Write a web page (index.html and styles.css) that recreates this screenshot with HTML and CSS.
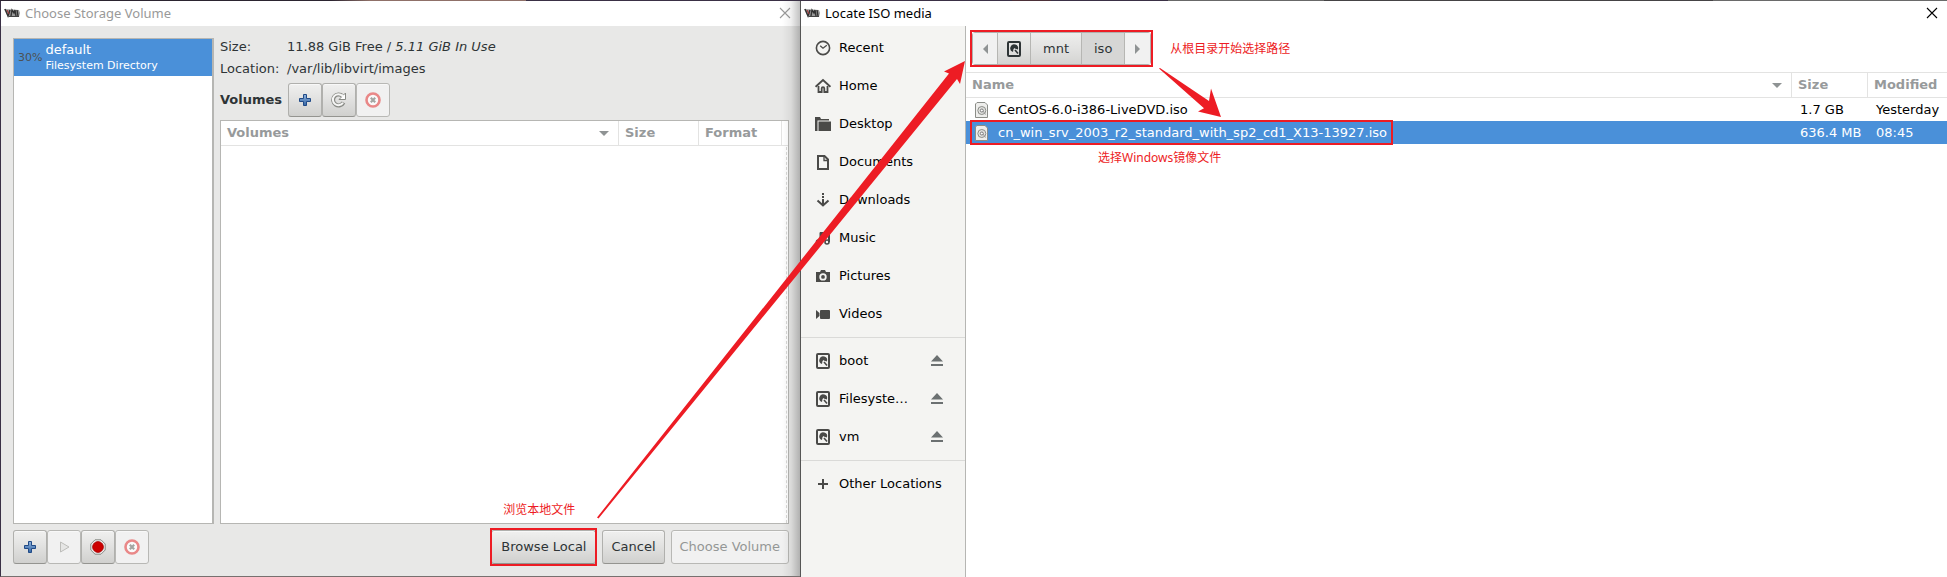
FILE: index.html
```
<!DOCTYPE html>
<html lang="en">
<head>
<meta charset="utf-8">
<title>Choose Storage Volume</title>
<link rel="stylesheet" href="styles.css">
</head>
<body>
<svg class="defs" aria-hidden="true">
  <defs>
    <linearGradient id="blue" x1="0" y1="0" x2="0" y2="1"><stop offset="0" stop-color="#8fb3dd"/><stop offset="1" stop-color="#3465a4"/></linearGradient>
    <symbol id="vm" viewBox="0 0 16 16">
      <path d="M0 4l15 1 1 3-1 4H4z" fill="#999"/>
      <path d="M1 4l3 7 2-6M7 11l1-6 2 3 1-3 1 6M13 5l1 6" fill="none" stroke="#333" stroke-width="1.4"/>
      <path d="M3 5l2 4" stroke="#a33" stroke-width="1"/>
      <path d="M5 11.500h10" stroke="#444"/>
    </symbol>
    <symbol id="close" viewBox="0 0 12 12"><path d="M1 1l10 10M11 1L1 11" fill="none" stroke="currentColor" stroke-width="1.1"/></symbol>
    <symbol id="add" viewBox="0 0 16 16"><path d="M6.500 2.500h3v4h4v3h-4v4h-3v-4h-4v-3h4z" fill="url(#blue)" stroke="#204a87" stroke-linejoin="round"/></symbol>
    <symbol id="refresh" viewBox="0 0 16 16">
      <path d="M12.500 10.500A5.500 5.500 0 1 1 11.500 4" fill="none" stroke="#888a85" stroke-width="4"/>
      <path d="M14.500 1v6.500H8l2.500-2.500z" fill="#fff" stroke="#888a85"/>
      <path d="M12 10.700A5.500 5.500 0 1 1 11.500 4l1-1" fill="none" stroke="#f6f6f5" stroke-width="2"/>
    </symbol>
    <symbol id="delete" viewBox="0 0 16 16">
      <circle cx="8" cy="8" r="6.500" fill="#fafafa" stroke="#e98888" stroke-width="2.600"/>
      <path d="M5.800 5.800l4.400 4.400M10.200 5.800l-4.400 4.400" stroke="#a3a5a2" stroke-width="2.200"/>
    </symbol>
    <symbol id="play" viewBox="0 0 16 16"><path d="M4.500 3l8.500 5-8.500 5z" fill="#e6e6e5" stroke="#bdbdba"/></symbol>
    <symbol id="stop" viewBox="0 0 16 16">
      <path d="M5 .8h6L15.200 5v6L11 15.200H5L.8 11V5z" fill="#eee" stroke="#888a85"/>
      <circle cx="8" cy="8" r="5.400" fill="#cc0000" stroke="#a40000" stroke-width=".8"/>
    </symbol>
    <symbol id="recent" viewBox="0 0 16 16"><circle cx="8" cy="8" r="6.600" fill="none" stroke="currentColor" stroke-width="1.600"/><path d="M5.200 5.700L8 8.200l3.800-3" fill="none" stroke="currentColor" stroke-width="1.300"/></symbol>
    <symbol id="home" viewBox="0 0 16 16"><path d="M.6 8.800L8 2l7.400 6.800" fill="none" stroke="currentColor" stroke-width="1.900"/><path d="M3.500 8v6H6.700v-3.500a1.300 1.300 0 0 1 2.600 0V14h3.200V8" fill="none" stroke="currentColor" stroke-width="1.800"/></symbol>
    <symbol id="desktop" viewBox="0 0 16 16"><path d="M0 1h5l1 2h8v1.500H2.500V15H0z" fill="currentColor"/><path d="M3.500 5.500H16V15H3.500z" fill="currentColor"/></symbol>
    <symbol id="documents" viewBox="0 0 16 16"><path d="M3 2h6.500L13 5.500V15H3z" fill="none" stroke="currentColor" stroke-width="2"/><path d="M9 2v4.500h4" fill="none" stroke="currentColor" stroke-width="1.300"/></symbol>
    <symbol id="downloads" viewBox="0 0 16 16"><path d="M8 1v2M8 4v2M8 7v6" stroke="currentColor" stroke-width="2"/><path d="M2.500 8.500L8 13.500l5.500-5" fill="none" stroke="currentColor" stroke-width="2"/></symbol>
    <symbol id="music" viewBox="0 0 16 16"><path d="M5.500 12V3.500H14V12" fill="none" stroke="currentColor" stroke-width="2"/><path d="M5 2h10v4H5z" fill="currentColor"/><circle cx="3.500" cy="12" r="2.800" fill="currentColor"/><circle cx="12" cy="12" r="2" fill="none" stroke="currentColor" stroke-width="1.600"/></symbol>
    <symbol id="pictures" viewBox="0 0 16 16"><path fill-rule="evenodd" d="M1 4h4l1-2h4l1 2h4v10H1zM8 5.200a3.700 3.700 0 1 0 0 7.400 3.700 3.700 0 0 0 0-7.400z" fill="currentColor"/><circle cx="8" cy="8.900" r="1.900" fill="currentColor"/></symbol>
    <symbol id="videos" viewBox="0 0 16 16"><path d="M1 4l3.500 3v3L1 13z" fill="currentColor"/><rect x="5" y="4" width="10" height="9" rx="1" fill="currentColor"/></symbol>
    <symbol id="drive" viewBox="0 0 16 16"><rect x="2" y="1" width="12" height="14" rx="1" fill="none" stroke="currentColor" stroke-width="2"/><path d="M7 11a3.900 3.900 0 1 1 4.900-2.500L9.300 7.800 8.700 7 7.500 8z" fill="currentColor"/><path d="M9 9l3 3.500" stroke="currentColor" stroke-width="1.600"/></symbol>
    <symbol id="plus" viewBox="0 0 16 16"><path d="M8 3v10M3 8h10" stroke="currentColor" stroke-width="2"/></symbol>
    <symbol id="eject" viewBox="0 0 12 12"><path d="M6 0l6 6.500H0zM0 9h12v2H0z" fill="currentColor"/></symbol>
    <symbol id="disc" viewBox="0 0 14 16"><path d="M2 .5h8L12.500 3v12.500H.5V2z" fill="#eeeeec" stroke="#8b8d88"/><circle cx="6.800" cy="8.500" r="4" fill="#e2e2e0" stroke="#8b8d88"/><circle cx="6.800" cy="8.500" r="1.500" fill="#fff" stroke="#777"/><path d="M8 9l2.500 3.500" stroke="#999"/></symbol>
  </defs>
</svg>

<main class="screen">
  <section class="window volumes-window">
    <header class="titlebar inactive">
      <svg class="icon"><use href="#vm"/></svg>
      <h1>Choose Storage Volume</h1>
      <button class="close" aria-label="Close"><svg><use href="#close"/></svg></button>
    </header>
    <div class="chooser">
      <div class="panes">
        <div class="pools">
          <button class="pool">
            <span class="percent">30%</span>
            <span class="pool-text"><span>default</span><small>Filesystem Directory</small></span>
          </button>
        </div>
        <div class="details">
          <dl class="facts">
            <dt>Size:</dt><dd>11.88 GiB Free / <i>5.11 GiB In Use</i></dd>
            <dt>Location:</dt><dd>/var/lib/libvirt/images</dd>
          </dl>
          <div class="toolbar">
            <h2>Volumes</h2>
            <div class="group">
              <button class="btn square" aria-label="New volume"><svg class="icon"><use href="#add"/></svg></button>
              <button class="btn square" aria-label="Refresh"><svg class="icon"><use href="#refresh"/></svg></button>
              <button class="btn square" disabled aria-label="Delete volume"><svg class="icon"><use href="#delete"/></svg></button>
            </div>
          </div>
          <div class="list">
            <table class="table">
              <thead><tr><th class="sorted">Volumes</th><th class="col-vsize">Size</th><th class="col-format">Format</th><th class="col-rest"></th></tr></thead>
            </table>
            <span class="scroll"></span>
          </div>
        </div>
      </div>
      <footer class="actions">
        <div class="group">
          <button class="btn square" aria-label="Add pool"><svg class="icon"><use href="#add"/></svg></button>
          <button class="btn square" disabled aria-label="Start pool"><svg class="icon"><use href="#play"/></svg></button>
          <button class="btn square" aria-label="Stop pool"><svg class="icon"><use href="#stop"/></svg></button>
          <button class="btn square" disabled aria-label="Delete pool"><svg class="icon"><use href="#delete"/></svg></button>
        </div>
        <div class="confirm">
          <div class="marked browse"><button class="btn">Browse Local</button><span class="note note-browse" lang="zh">浏览本地文件</span></div>
          <button class="btn">Cancel</button>
          <button class="btn" disabled>Choose Volume</button>
        </div>
      </footer>
    </div>
  </section>

  <section class="window media-window">
    <header class="titlebar">
      <svg class="icon"><use href="#vm"/></svg>
      <h1>Locate ISO media</h1>
      <button class="close" aria-label="Close"><svg><use href="#close"/></svg></button>
    </header>
    <div class="browser">
      <nav class="places">
        <ul>
          <li><a href="#"><svg class="icon"><use href="#recent"/></svg><span>Recent</span></a></li>
          <li><a href="#"><svg class="icon"><use href="#home"/></svg><span>Home</span></a></li>
          <li><a href="#"><svg class="icon"><use href="#desktop"/></svg><span>Desktop</span></a></li>
          <li><a href="#"><svg class="icon"><use href="#documents"/></svg><span>Documents</span></a></li>
          <li><a href="#"><svg class="icon"><use href="#downloads"/></svg><span>Downloads</span></a></li>
          <li><a href="#"><svg class="icon"><use href="#music"/></svg><span>Music</span></a></li>
          <li><a href="#"><svg class="icon"><use href="#pictures"/></svg><span>Pictures</span></a></li>
          <li><a href="#"><svg class="icon"><use href="#videos"/></svg><span>Videos</span></a></li>
        </ul>
        <ul>
          <li><a href="#"><svg class="icon"><use href="#drive"/></svg><span>boot</span></a><button class="eject" aria-label="Eject boot"><svg><use href="#eject"/></svg></button></li>
          <li><a href="#"><svg class="icon"><use href="#drive"/></svg><span>Filesyste…</span></a><button class="eject" aria-label="Eject filesystem"><svg><use href="#eject"/></svg></button></li>
          <li><a href="#"><svg class="icon"><use href="#drive"/></svg><span>vm</span></a><button class="eject" aria-label="Eject vm"><svg><use href="#eject"/></svg></button></li>
        </ul>
        <ul>
          <li><a href="#"><svg class="icon"><use href="#plus"/></svg><span>Other Locations</span></a></li>
        </ul>
      </nav>
      <div class="files">
        <div class="pathrow">
          <div class="marked pathbar">
            <button class="crumb end" aria-label="Back"><span class="tri left"></span></button>
            <button class="crumb" aria-label="Root"><svg class="icon"><use href="#drive"/></svg></button>
            <button class="crumb">mnt</button>
            <button class="crumb current">iso</button>
            <button class="crumb end" aria-label="Forward"><span class="tri right"></span></button>
            <svg class="arrow-short" viewBox="0 0 62 49" aria-hidden="true"><path d="M0 .5L1 0 50 33l2-12.500L62 49l-23-5.500 6-3.300z"/></svg>
          </div>
          <span class="note" lang="zh">从根目录开始选择路径</span>
        </div>
        <table class="table filetable">
          <thead><tr><th class="sorted">Name</th><th class="col-size">Size</th><th class="col-modified">Modified</th></tr></thead>
          <tbody>
            <tr><td><span class="file"><svg class="disc"><use href="#disc"/></svg>CentOS-6.0-i386-LiveDVD.iso</span></td><td>1.7 GB</td><td>Yesterday</td></tr>
            <tr class="selected"><td><span class="file marked"><svg class="disc"><use href="#disc"/></svg>cn_win_srv_2003_r2_standard_with_sp2_cd1_X13-13927.iso<span class="note note-image" lang="zh">选择Windows镜像文件</span></span></td><td>636.4 MB</td><td>08:45</td></tr>
          </tbody>
        </table>
      </div>
    </div>
  </section>
  <svg class="arrow-long" viewBox="0 0 1947 577" preserveAspectRatio="none" aria-hidden="true"><path d="M597 517.500L949 73.500l-5-2L965 61l-5 23-3-5L598.500 518.500z"/></svg>
</main>
</body>
</html>
```
FILE: styles.css
```
* { box-sizing: border-box; }

body {
  margin: 0;
  color: #2e3436;
  font: 13px/20px "DejaVu Sans", "Noto Sans CJK SC", sans-serif;
}

h1, h2, dl, dd, ul { margin: 0; padding: 0; }
ul { list-style: none; }
button { margin: 0; padding: 0; border: 0; background: none; color: inherit; font: inherit; }
a { color: inherit; text-decoration: none; }
svg { display: block; flex: none; }

.defs { position: absolute; width: 0; height: 0; }
.icon { width: 16px; height: 16px; }

.screen {
  position: relative;
  display: grid;
  grid-template-columns: 800fr 1147fr;
  min-height: 100vh;
  padding-top: 1px;
  background: linear-gradient(90deg, #2b2430 0 17%, #8f7068 19% 27%, #3a3045 27% 52%, #4b3038 52% 54%, #3a3045 54% 60%, #686868 60% 68%, #454345 68% 88%, #6a6a6a 88%);
}

.window { display: flex; flex-direction: column; min-width: 0; }

.volumes-window {
  position: relative;
  border-left: 1px solid #3a3045;
  border-bottom: 1px solid #77706f;
}

.volumes-window::after {
  content: "";
  position: absolute;
  inset: 0 0 0 auto;
  width: 18px;
  background: linear-gradient(90deg, rgba(0, 0, 0, 0), rgba(0, 0, 0, .06) 50%, rgba(0, 0, 0, .24));
  pointer-events: none;
}

.media-window { border-left: 1px solid #555; }

.titlebar {
  display: flex;
  align-items: center;
  gap: 5px;
  height: 25px;
  padding: 0 9px 2px 3px;
  background: #fff;
  color: #000;
}

.titlebar.inactive { color: #999; }
.titlebar h1 { flex: 1; font: 13px/20px "Noto Sans", sans-serif; }
.close svg { width: 12px; height: 12px; }

.chooser {
  flex: 1;
  display: flex;
  flex-direction: column;
  gap: 6px;
  padding: 12px 11px 12px 12px;
  background: #e8e8e7;
}

.panes { flex: 1; display: flex; gap: 6px; }

.pools {
  width: 201px;
  border: 1px solid #b6b6b3;
  border-right-width: 2px;
  background: #fff;
}

.pool {
  display: flex;
  align-items: center;
  gap: 3px;
  width: 100%;
  height: 37px;
  padding: 1px 4px 0;
  background: #4a90d9;
  color: #fff;
  text-align: left;
}

.percent { color: #4d5052; font-size: 11px; }
.pool-text { display: flex; flex-direction: column; line-height: 16px; }
.pool-text small { font-size: 11px; line-height: 16px; }

.details { flex: 1; display: flex; flex-direction: column; min-width: 0; }

.facts {
  display: grid;
  grid-template-columns: 67px 1fr;
  row-gap: 6px;
  padding-top: 1px;
  line-height: 16px;
}

.toolbar { display: flex; align-items: center; gap: 6px; padding: 6px 0 3px; }
.toolbar h2 { font-size: 13px; line-height: 20px; }
.group { display: flex; }

.btn {
  height: 34px;
  padding: 0 8px;
  border: 1px solid #b0b0ad;
  border-bottom-color: #949490;
  border-radius: 3px;
  background: linear-gradient(#f0f0ef, #e4e4e3 40%, #d0d0ce);
  box-shadow: inset 0 1px #f8f8f8;
  white-space: nowrap;
}

.btn:disabled { border-color: #b8b8b5; background: #f1f1f1; color: #949796; }
.square { display: grid; place-items: center; width: 34px; padding: 0; }

.list {
  flex: 1;
  position: relative;
  border: 1px solid #b6b6b3;
  background: #fff;
}

.scroll {
  position: absolute;
  inset: 26px 1px 0 auto;
  border-right: 1px dashed #d8d8d6;
}

.table { width: 100%; border-spacing: 0; table-layout: fixed; }

.table th {
  height: 25px;
  padding: 0 6px;
  border-right: 1px solid #e3e3e2;
  border-bottom: 1px solid #e3e3e2;
  color: #979a9b;
  text-align: left;
}

.table th:last-child { border-right: 0; }
.sorted { position: relative; }

.sorted::after {
  content: "";
  position: absolute;
  top: 10px;
  right: 9px;
  border: 5px solid transparent;
  border-top-color: #8f9394;
  border-bottom: 0;
}

.col-vsize { width: 80px; }
.col-format { width: 83px; }
.col-rest { width: 6px; }
.table .col-rest { padding: 0; }

.actions { display: flex; justify-content: space-between; }
.confirm { display: flex; gap: 6px; }
.browse .btn { padding: 0 9px; }

.marked { position: relative; }

.marked::after {
  content: "";
  position: absolute;
  inset: -2px -1px;
  border: 2px solid #ed1c24;
  pointer-events: none;
}

.note {
  color: #ed1c24;
  font: 12px/18px "Noto Sans", "Noto Sans CJK SC", sans-serif;
  white-space: nowrap;
}

.note-browse { position: absolute; left: 12px; bottom: 45px; }
.note-image { position: absolute; left: 123px; top: 26px; }

.browser { flex: 1; display: flex; background: #fff; }

.places {
  width: 165px;
  padding-top: 3px;
  border-right: 1px solid #b6b6b3;
  background: #f4f4f2;
  color: #000;
}

.places ul + ul { margin-top: 4px; padding-top: 4px; border-top: 1px solid #dadad8; }
.places li { display: flex; align-items: center; height: 38px; padding: 0 22px 0 14px; }
.places a { flex: 1; display: flex; align-items: center; gap: 8px; white-space: nowrap; }
.places .icon { color: #4a4a48; }
.eject { color: #6b7071; }
.eject svg { width: 12px; height: 12px; }

.files { flex: 1; min-width: 0; }
.pathrow { display: flex; align-items: center; gap: 19px; padding: 6px 6px 7px; }
.pathbar { display: flex; border: 1px solid #b0b0ad; border-radius: 3px; }
.pathbar::after { inset: -3px; }

.crumb {
  display: grid;
  place-items: center;
  min-width: 33px;
  height: 31px;
  padding: 0 12px;
  border-right: 1px solid #b6b6b3;
  background: linear-gradient(#eeeeed, #e2e2e1 50%, #d4d4d2);
}

.crumb:has(svg) { padding: 0 8px; }
.crumb.end { min-width: 25px; padding: 0; background: #f1f1f1; }
.crumb.end:nth-child(5) { border-right: 0; }
.crumb.current { background: #d6d6d5; }

.tri { border: 5px solid transparent; }
.tri.left { border-right-color: #8f9394; border-left: 0; }
.tri.right { border-left-color: #8f9394; border-right: 0; }

.filetable { border-top: 1px solid #e3e3e2; }
.col-size { width: 76px; }
.col-modified { width: 79px; }
.filetable td { height: 23px; padding: 0 0 0 8px; color: #000; white-space: nowrap; }
.filetable .selected td { background: #4a90d9; color: #fff; }
.file { display: inline-flex; align-items: center; gap: 9px; padding-right: 5px; vertical-align: middle; }
.filetable td:first-child { padding-left: 9px; }
.file.marked::after { inset: -3px -1px -2px -5px; }
.disc { width: 14px; height: 16px; }

.arrow-short {
  position: absolute;
  left: 100%;
  top: 100%;
  width: 62px;
  height: 49px;
  margin: 4px 0 0 9px;
  fill: #ed1c24;
  z-index: 2;
}

.arrow-long {
  position: absolute;
  inset: 0;
  width: 100%;
  height: 100%;
  fill: #ed1c24;
  pointer-events: none;
}
```
